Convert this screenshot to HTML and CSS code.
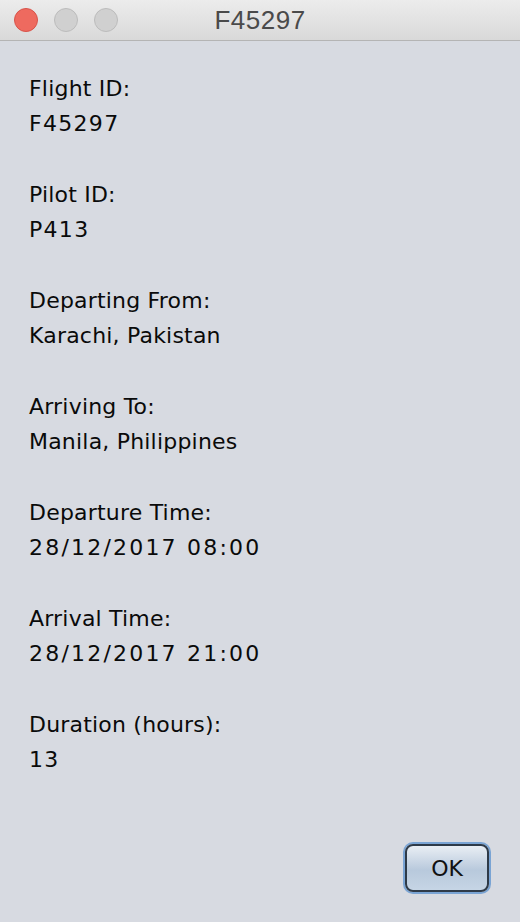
FILE: index.html
```html
<!DOCTYPE html>
<html>
<head>
<meta charset="utf-8">
<link rel="stylesheet" href="styles.css">
</head>
<body>
<div class="window">
  <div class="titlebar">
    <div class="lights">
      <span class="light red"></span>
      <span class="light grey"></span>
      <span class="light grey"></span>
    </div>
    <div class="title">F45297</div>
  </div>
  <div class="content">
    <div class="fields">
      <div class="field"><div class="line">Flight ID:</div><div class="line num">F45297</div></div>
      <div class="field"><div class="line">Pilot ID:</div><div class="line num">P413</div></div>
      <div class="field"><div class="line">Departing From:</div><div class="line">Karachi, Pakistan</div></div>
      <div class="field"><div class="line">Arriving To:</div><div class="line">Manila, Philippines</div></div>
      <div class="field"><div class="line">Departure Time:</div><div class="line date">28/12/2017 08:00</div></div>
      <div class="field"><div class="line">Arrival Time:</div><div class="line date">28/12/2017 21:00</div></div>
      <div class="field"><div class="line">Duration (hours):</div><div class="line num">13</div></div>
    </div>
    <div class="actions">
      <button class="ok">OK</button>
    </div>
  </div>
</div>
</body>
</html>
```
FILE: styles.css
```css
html, body {
  margin: 0;
  padding: 0;
}
body {
  width: 520px;
  height: 922px;
  background: #d7dae1;
  font-family: "DejaVu Sans", "Liberation Sans", sans-serif;
  overflow: hidden;
}
.window {
  display: flex;
  flex-direction: column;
  height: 922px;
}
.titlebar {
  height: 40px;
  border-bottom: 1px solid #b4b4b4;
  background: linear-gradient(#ececec, #d9d9d9);
  display: flex;
  align-items: center;
  position: relative;
}
.lights {
  display: flex;
  gap: 16px;
  padding-left: 14px;
  position: relative;
  z-index: 1;
}
.light {
  width: 24px;
  height: 24px;
  border-radius: 50%;
  box-sizing: border-box;
}
.light.red {
  background: #ee6a5f;
  border: 1px solid #d8534a;
}
.light.grey {
  background: #d0d0d0;
  border: 1px solid #bcbcbc;
}
.title {
  position: absolute;
  left: 0;
  right: 0;
  top: 0;
  line-height: 40px;
  text-align: center;
  font-family: "Liberation Sans", sans-serif;
  font-size: 26px;
  color: #4a4a4a;
  letter-spacing: 0.5px;
}
.content {
  flex: 1;
  display: flex;
  flex-direction: column;
  padding: 30px 31px 30px 29px;
}
.fields {
  flex: 1;
  display: flex;
  flex-direction: column;
  gap: 36px;
}
.line {
  font-size: 22px;
  line-height: 35px;
  letter-spacing: 0.2px;
  color: #0a0a0a;
  height: 35px;
  display: flex;
  align-items: center;
}
.line.num {
  letter-spacing: 1.3px;
}
.line.date {
  letter-spacing: 2.2px;
}
.actions {
  display: flex;
  justify-content: flex-end;
}
.ok {
  width: 84px;
  height: 48px;
  border-radius: 8px;
  border: 2px solid #2e3a48;
  box-shadow: 0 0 0 2px #7aa4d4;
  background: linear-gradient(#e9eef4, #b8c9dc 55%, #c6d5e5);
  font-family: "DejaVu Sans", sans-serif;
  font-size: 22px;
  color: #111;
  padding: 0;
}
```
